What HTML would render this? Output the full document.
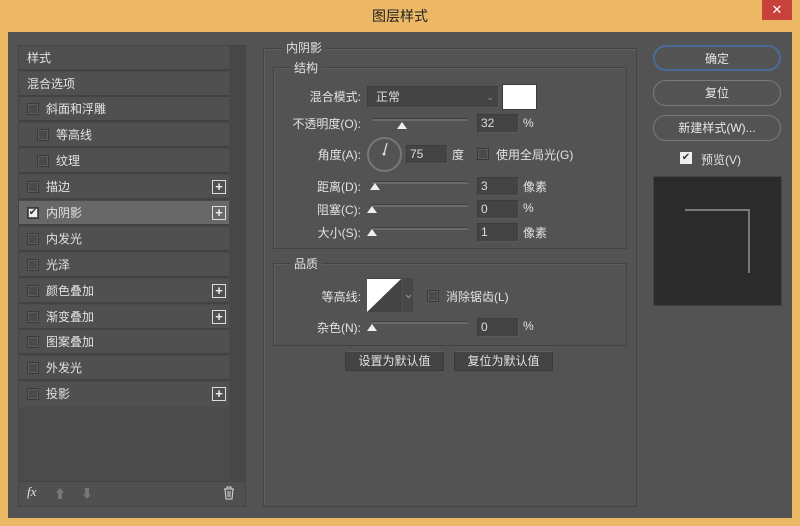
<!DOCTYPE html>
<html><head><meta charset="utf-8"><style>
*{margin:0;padding:0;box-sizing:border-box}
body{width:800px;height:526px;background:#ecb866;position:relative;overflow:hidden;font-family:"Liberation Sans","Noto Sans CJK SC",sans-serif;font-size:12px;color:#e2e2e2}
.a{position:absolute}
.body{left:8px;top:32px;width:784px;height:486px;background:#535353}
.title{left:0;top:6px;width:800px;text-align:center;color:#222;font-size:14px}
.close{left:762px;top:0;width:30px;height:20px;background:#c8413a;color:#fff;text-align:center;font-size:13px;line-height:20px}
.list{left:18px;top:45px;width:228px;height:462px;background:#4b4b4b;border:1px solid #444}
.scroll{left:230px;top:46px;width:16px;height:434px;background:#474747}
.row{position:absolute;left:19px;width:210px;height:25px;border-bottom:2px solid #424242;line-height:24px;padding-left:8px;background:#505050}
.row .cb{position:absolute;left:8px;top:6px}
.row .t{margin-left:19px}
.cb{display:inline-block;width:12px;height:12px;border:1px solid #3a3a3a;background:#4a4a4a;box-shadow:inset 0 0 0 1px #5c5c5c}
.plus{position:absolute;right:3px;top:5px;width:14px;height:14px;border:1px solid #ddd;color:#eee;font-size:13px;line-height:11px;text-align:center;font-weight:bold}
.fs{border:1px solid #434343;box-shadow:inset 1px 1px 0 #5e5e5e}
.lbl{position:absolute;text-align:right;width:90px}
.inp{position:absolute;height:19px;background:#444;border:1px solid #3c3c3c;border-right-color:#5a5a5a;border-bottom-color:#5a5a5a;padding-left:3px;line-height:17px;color:#ddd}
.sl{position:absolute;height:3px;background:#6a6a6a;border-top:1px solid #3f3f3f}
.th{position:absolute;width:0;height:0;border-left:5px solid transparent;border-right:5px solid transparent;border-bottom:7px solid #eee}
.btn{position:absolute;width:128px;height:26px;border:1px solid #7a7a7a;border-radius:13px;text-align:center;line-height:24px;color:#e6e6e6}
.sb{position:absolute;height:20px;background:#444;border:1px solid #3a3a3a;border-top-color:#5e5e5e;text-align:center;line-height:18px}
</style></head><body>
<div class="a title">图层样式</div>
<div class="a close">✕</div>
<div class="a body"></div>
<div class="a list"></div>
<div class="a scroll"></div>
<div class="row" style="top:46px">样式</div>
<div class="row" style="top:72px">混合选项</div>
<div class="row" style="top:97px"><span class="cb"></span><span class="t">斜面和浮雕</span></div>
<div class="row" style="top:123px"><span class="cb" style="left:18px"></span><span class="t" style="margin-left:29px">等高线</span></div>
<div class="row" style="top:149px"><span class="cb" style="left:18px"></span><span class="t" style="margin-left:29px">纹理</span></div>
<div class="row" style="top:175px"><span class="cb"></span><span class="t">描边</span><span class="plus">+</span></div>
<div class="row" style="top:201px;background:#686868"><span class="cb" style="background:#eee;color:#333;font-size:10px;line-height:10px;text-align:center">✔</span><span class="t">内阴影</span><span class="plus">+</span></div>
<div class="row" style="top:227px"><span class="cb"></span><span class="t">内发光</span></div>
<div class="row" style="top:253px"><span class="cb"></span><span class="t">光泽</span></div>
<div class="row" style="top:279px"><span class="cb"></span><span class="t">颜色叠加</span><span class="plus">+</span></div>
<div class="row" style="top:305px"><span class="cb"></span><span class="t">渐变叠加</span><span class="plus">+</span></div>
<div class="row" style="top:330px"><span class="cb"></span><span class="t">图案叠加</span></div>
<div class="row" style="top:356px"><span class="cb"></span><span class="t">外发光</span></div>
<div class="row" style="top:382px;border-bottom:none"><span class="cb"></span><span class="t">投影</span><span class="plus">+</span></div>
<div class="a" style="left:19px;top:481px;width:226px;height:25px;background:#505050;border-top:1px solid #444"></div>
<div class="a" style="left:27px;top:484px;font-style:italic;font-size:13px;font-family:'Liberation Serif',serif">fx</div>
<div class="a" style="left:54px;top:485px;color:#777;font-size:12px">⬆</div>
<div class="a" style="left:81px;top:485px;color:#777;font-size:12px">⬇</div>
<svg class="a" style="left:222px;top:486px" width="14" height="14"><path d="M2 3h10M5 3V1h4v2M3 3l1 10h6l1-10M6 5v6M8 5v6" stroke="#ddd" fill="none"/></svg>

<div class="a fs" style="left:263px;top:48px;width:374px;height:459px"></div>
<div class="a" style="left:282px;top:39px;background:#535353;padding:0 4px">内阴影</div>
<div class="a fs" style="left:273px;top:67px;width:354px;height:182px"></div>
<div class="a" style="left:290px;top:59px;background:#535353;padding:0 4px">结构</div>
<div class="lbl" style="left:271px;top:88px">混合模式:</div>
<div class="inp" style="left:367px;top:86px;width:132px;height:22px;line-height:20px;padding-left:8px">正常<span style="position:absolute;right:4px;color:#999;font-size:9px">⌄</span></div>
<div class="a" style="left:502px;top:84px;width:35px;height:26px;background:#fff;border:1px solid #3c3c3c"></div>
<div class="lbl" style="left:271px;top:115px">不透明度(O):</div>
<div class="sl" style="left:372px;top:118px;width:96px"></div><div class="th" style="left:397px;top:122px"></div>
<div class="inp" style="left:477px;top:114px;width:42px">32</div><div class="a" style="left:523px;top:116px">%</div>
<div class="lbl" style="left:271px;top:146px">角度(A):</div>
<div class="a" style="left:367px;top:137px;width:35px;height:35px;border:2px solid #777;border-radius:50%"></div>
<svg class="a" style="left:367px;top:137px" width="36" height="36"><line x1="17" y1="17" x2="20" y2="6" stroke="#ddd" stroke-width="1.3"/><circle cx="17" cy="17" r="1.5" fill="#ddd"/></svg>
<div class="inp" style="left:406px;top:145px;width:42px">75</div><div class="a" style="left:452px;top:146px">度</div>
<span class="cb a" style="left:477px;top:148px"></span><div class="a" style="left:496px;top:146px">使用全局光(G)</div>
<div class="lbl" style="left:271px;top:178px">距离(D):</div>
<div class="sl" style="left:372px;top:181px;width:96px"></div><div class="th" style="left:370px;top:183px"></div>
<div class="inp" style="left:477px;top:177px;width:42px">3</div><div class="a" style="left:523px;top:178px">像素</div>
<div class="lbl" style="left:271px;top:201px">阻塞(C):</div>
<div class="sl" style="left:372px;top:204px;width:96px"></div><div class="th" style="left:367px;top:206px"></div>
<div class="inp" style="left:477px;top:200px;width:42px">0</div><div class="a" style="left:523px;top:201px">%</div>
<div class="lbl" style="left:271px;top:224px">大小(S):</div>
<div class="sl" style="left:372px;top:227px;width:96px"></div><div class="th" style="left:367px;top:229px"></div>
<div class="inp" style="left:477px;top:223px;width:42px">1</div><div class="a" style="left:523px;top:224px">像素</div>

<div class="a fs" style="left:273px;top:263px;width:354px;height:83px"></div>
<div class="a" style="left:290px;top:255px;background:#535353;padding:0 4px">品质</div>
<div class="lbl" style="left:271px;top:288px">等高线:</div>
<svg class="a" style="left:367px;top:278px" width="48" height="36"><rect width="35" height="34" x="0" y="0" fill="#444"/><path d="M0 34V1h34z" fill="#fff"/><rect x="36" y="0" width="10" height="34" fill="#474747"/><path d="M39 17l2.5 2.5 2.5-2.5" stroke="#999" fill="none"/></svg>
<span class="cb a" style="left:427px;top:290px"></span><div class="a" style="left:446px;top:288px">消除锯齿(L)</div>
<div class="lbl" style="left:271px;top:319px">杂色(N):</div>
<div class="sl" style="left:372px;top:321px;width:96px"></div><div class="th" style="left:367px;top:324px"></div>
<div class="inp" style="left:477px;top:318px;width:42px">0</div><div class="a" style="left:523px;top:319px">%</div>
<div class="sb" style="left:345px;top:351px;width:99px">设置为默认值</div>
<div class="sb" style="left:454px;top:351px;width:99px">复位为默认值</div>

<div class="btn" style="left:653px;top:45px;border:2px solid #4a6a9a">确定</div>
<div class="btn" style="left:653px;top:80px">复位</div>
<div class="btn" style="left:653px;top:115px">新建样式(W)...</div>
<span class="a" style="left:680px;top:152px;width:12px;height:12px;background:#eee;color:#333;font-size:10px;line-height:12px;text-align:center">✔</span>
<div class="a" style="left:701px;top:151px">预览(V)</div>
<div class="a" style="left:653px;top:176px;width:129px;height:130px;background:#2b2b2b;border:1px solid #444"></div>
<div class="a" style="left:685px;top:209px;width:65px;height:2px;background:#7a7a7a"></div>
<div class="a" style="left:748px;top:209px;width:2px;height:64px;background:#7a7a7a"></div>
</body></html>
